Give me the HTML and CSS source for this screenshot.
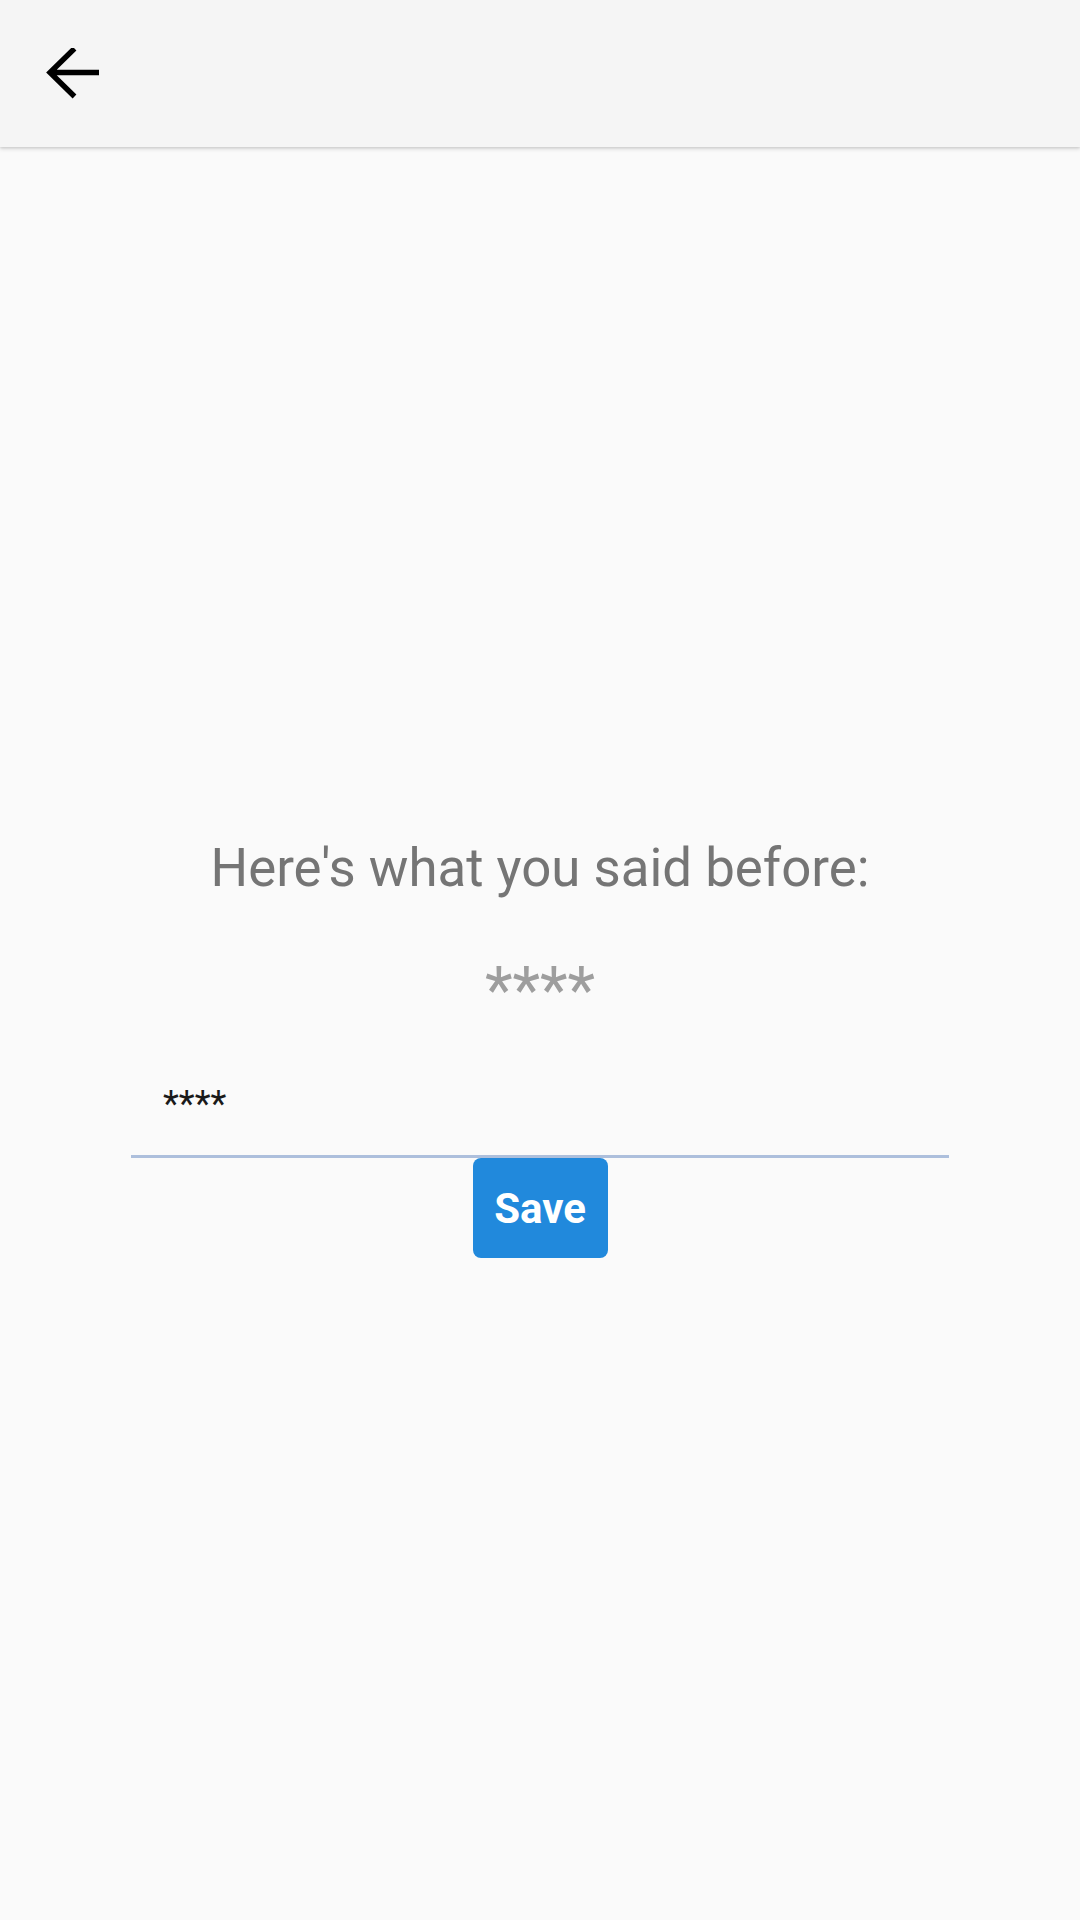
FILE: index.html
```html
<!DOCTYPE html>
<html>
<head>
<meta charset="utf-8">
<link rel="stylesheet" href="styles.css">
</head>
<body>
<header class="appbar">
  <svg class="back" width="60" height="60" viewBox="0 0 60 60">
    <path d="M55 24.5 H6 M30.5 0.5 L6 24.5 L30.5 48.5" fill="none" stroke="#000" stroke-width="5.4" stroke-linecap="butt" stroke-linejoin="miter"/>
  </svg>
</header>
<main class="content">
  <p class="label">Here's what you said before:</p>
  <p class="secret">****</p>
  <div class="field"><span class="field-text">****</span></div>
  <button class="save">Save</button>
</main>
</body>
</html>
```
FILE: styles.css
```css
html, body {
  margin: 0;
  padding: 0;
}
body {
  width: 1080px;
  height: 1920px;
  background: #fafafa;
  font-family: Roboto, "Noto Sans", sans-serif;
  overflow: hidden;
}
.appbar {
  height: 147px;
  background: #f5f5f5;
  box-shadow: 0 2px 4px rgba(0,0,0,0.14), 0 1px 2px rgba(0,0,0,0.08);
  display: flex;
  align-items: flex-start;
  padding-left: 44px;
  padding-top: 48px;
  box-sizing: border-box;
  position: relative;
  z-index: 1;
}
.back {
  display: block;
}
.content {
  display: flex;
  flex-direction: column;
  align-items: center;
  padding-top: 691px;
}
.label {
  margin: 0;
  font-size: 52.8px;
  line-height: 61px;
  color: #757575;
}
.secret {
  margin: 61px 0 0;
  font-size: 64px;
  line-height: 61px;
  color: #9e9e9e;
}
.field {
  margin-top: 63px;
  width: 818px;
  height: 74px;
  box-sizing: border-box;
  border-bottom: 3px solid #adbfdc;
  padding-left: 32px;
}
.field-text {
  display: block;
  font-size: 36.75px;
  line-height: 40px;
  color: #1a1a1a;
}
.save {
  margin-top: 0;
  width: 135px;
  height: 100px;
  border: none;
  border-radius: 8px;
  background: #2189dc;
  color: #ffffff;
  font-family: Roboto, "Noto Sans", sans-serif;
  font-weight: 700;
  font-size: 42px;
  padding: 0;
}
```
